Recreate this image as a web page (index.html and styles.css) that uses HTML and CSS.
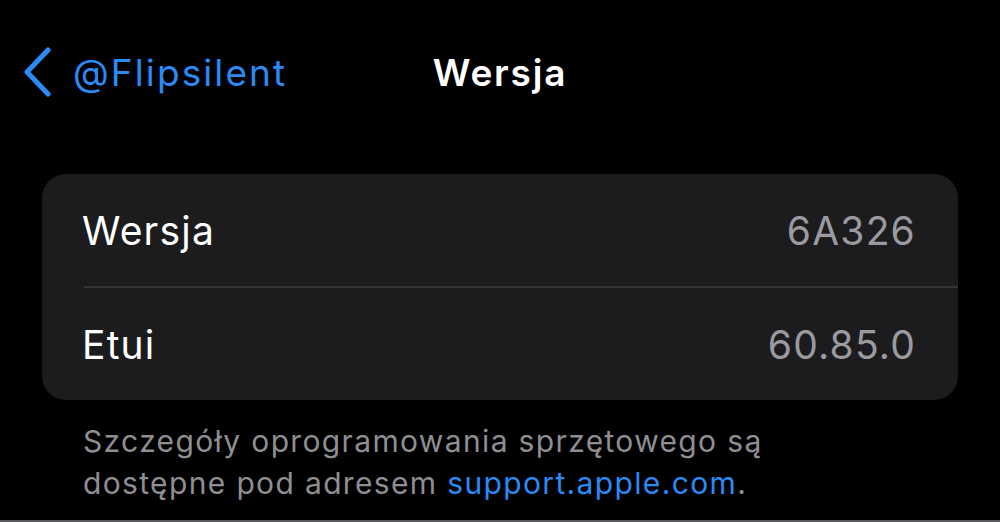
FILE: index.html
```html
<!DOCTYPE html>
<html>
<head>
  <meta charset="utf-8">
  <title>Wersja</title>
  <link rel="stylesheet" href="styles.css">
</head>
<body>
  <div class="screen">
    <!-- nawigacja -->
    <div class="navbar">
      <a class="back">
        <svg class="chevron" width="34" height="50" viewBox="0 0 34 50">
          <path d="M28 3 L7 25 L28 47" fill="none" stroke="#2a8af6" stroke-width="5" stroke-linecap="round" stroke-linejoin="round"/>
        </svg>
        <span>@Flipsilent</span>
      </a>
      <div class="nav-title">Wersja</div>
      <div></div>
    </div>

    <!-- lista -->
    <div class="group">
      <div class="row">
        <div class="row-label">Wersja</div>
        <div class="row-value">6A326</div>
      </div>
      <div class="separator"></div>
      <div class="row">
        <div class="row-label">Etui</div>
        <div class="row-value">60.85.0</div>
      </div>
    </div>

    <div class="footer">
      Szczegóły oprogramowania sprzętowego są<br>
      dostępne pod adresem <a class="link">support.apple.com</a>.
    </div>
  </div>
  <div class="bottom-line"></div>
</body>
</html>
```

FILE: styles.css
```css
body {
  margin: 0;
  background-color: #000;
  font-family: Inter, "Liberation Sans", sans-serif;
  color: #fff;
  -webkit-font-smoothing: antialiased;
}

.screen {
  height: 520px;
  overflow: hidden;
}

.navbar {
  display: grid;
  grid-template-columns: 1fr auto 1fr;
  align-items: center;
  height: 144px;
}

.back {
  display: flex;
  align-items: center;
  gap: 19px;
  padding-left: 20px;
  color: #2a8af6;
  font-size: 37px;
  letter-spacing: 2.1px;
}

.chevron {
  display: block;
}

.nav-title {
  font-size: 37px;
  font-weight: 600;
  letter-spacing: 1.8px;
}

.group {
  margin: 30px 42px 0 42px;
  background-color: #1c1c1e;
  border-radius: 24px;
  overflow: hidden;
}

.row {
  display: flex;
  align-items: center;
  justify-content: space-between;
  height: 112px;
  padding: 0 42px 0 40px;
  font-size: 39px;
  letter-spacing: 1.2px;
}

.row-value {
  color: #9a9aa0;
}

.separator {
  height: 2px;
  margin-left: 42px;
  background-color: #343436;
}

.footer {
  padding: 20px 84px 0 83px;
  font-size: 30px;
  line-height: 42px;
  color: #8e8e93;
  letter-spacing: 1.35px;
}

.link {
  color: #2a8af6;
}

.bottom-line {
  height: 2px;
  background-color: #5a5a5e;
}
```
